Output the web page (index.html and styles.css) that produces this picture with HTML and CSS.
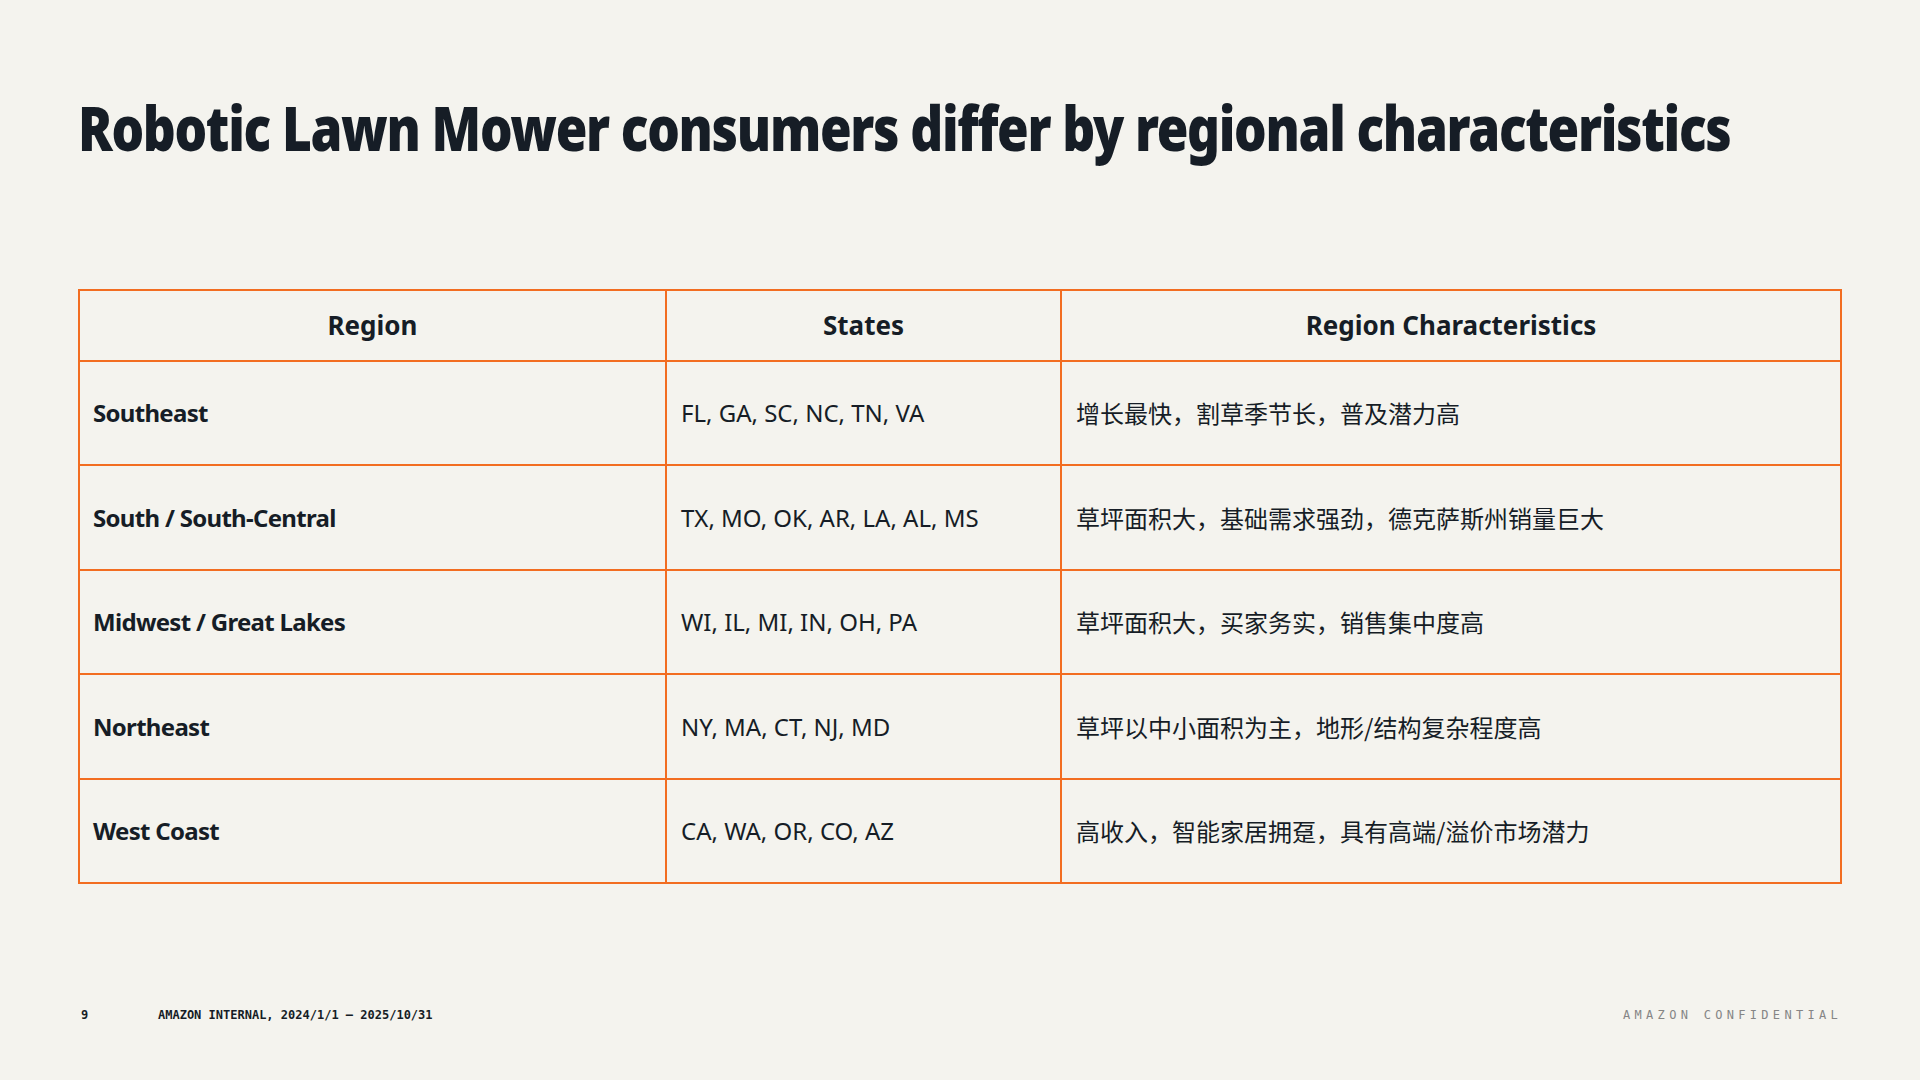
FILE: index.html
```html
<!DOCTYPE html>
<html lang="en">
<head>
<meta charset="utf-8">
<title>Robotic Lawn Mower consumers differ by regional characteristics</title>
<link rel="stylesheet" href="styles.css">
</head>
<body>
<div class="slide">
  <h1 class="title"><span class="title-text">Robotic Lawn Mower consumers differ by regional characteristics</span></h1>
  <table class="region-table">
    <colgroup>
      <col class="col-region">
      <col class="col-states">
      <col class="col-chars">
    </colgroup>
    <thead>
      <tr>
        <th>Region</th>
        <th>States</th>
        <th>Region Characteristics</th>
      </tr>
    </thead>
    <tbody>
      <tr>
        <td class="name">Southeast</td>
        <td>FL, GA, SC, NC, TN, VA</td>
        <td class="cjk">增长最快，割草季节长，普及潜力高</td>
      </tr>
      <tr>
        <td class="name">South / South-Central</td>
        <td>TX, MO, OK, AR, LA, AL, MS</td>
        <td class="cjk">草坪面积大，基础需求强劲，德克萨斯州销量巨大</td>
      </tr>
      <tr>
        <td class="name">Midwest / Great Lakes</td>
        <td>WI, IL, MI, IN, OH, PA</td>
        <td class="cjk">草坪面积大，买家务实，销售集中度高</td>
      </tr>
      <tr>
        <td class="name">Northeast</td>
        <td>NY, MA, CT, NJ, MD</td>
        <td class="cjk">草坪以中小面积为主，地形/结构复杂程度高</td>
      </tr>
      <tr>
        <td class="name">West Coast</td>
        <td>CA, WA, OR, CO, AZ</td>
        <td class="cjk">高收入，智能家居拥趸，具有高端/溢价市场潜力</td>
      </tr>
    </tbody>
  </table>
  <footer class="footer">
    <div class="footer-left">
      <span class="page-num">9</span>
      <span class="source">AMAZON INTERNAL, 2024/1/1 – 2025/10/31</span>
    </div>
    <div class="confidential">AMAZON CONFIDENTIAL</div>
  </footer>
</div>
</body>
</html>
```
FILE: styles.css
```css
html, body {
  margin: 0;
  padding: 0;
  background: #f4f3ee;
}

.slide {
  width: 1920px;
  height: 1080px;
  box-sizing: border-box;
  padding: 0 80px 0 78px;
  display: flex;
  flex-direction: column;
  color: #161d26;
  overflow: hidden;
}

.title {
  margin: 87px 0 0 0;
  font-family: "Noto Sans", "Inter", sans-serif;
  font-weight: 900;
  font-size: 62px;
  line-height: 80px;
  letter-spacing: -1.6px;
  white-space: nowrap;
}

.title-text {
  display: inline-block;
  transform: scaleX(0.828);
  transform-origin: left center;
}

.region-table {
  margin-top: 122px;
  width: 1762px;
  border-collapse: collapse;
  table-layout: fixed;
  font-family: "Noto Sans", "Noto Sans CJK SC", sans-serif;
  font-size: 24px;
  color: #161d26;
}

.col-region { width: 587px; }
.col-states { width: 395px; }
.col-chars { width: 780px; }

.region-table th,
.region-table td {
  border: 2px solid #f26d21;
  padding: 0 14px;
}

.region-table th {
  height: 68.5px;
  font-weight: 700;
  font-size: 26px;
  text-align: center;
}

.region-table td {
  height: 102.5px;
  font-weight: 400;
  text-align: left;
}

.region-table td.name {
  font-weight: 700;
  letter-spacing: -0.7px;
  padding-left: 13px;
}

.region-table td.cjk {
  font-family: "Noto Sans CJK SC", "Noto Sans", sans-serif;
}

.footer {
  margin-top: auto;
  margin-bottom: 57px;
  display: flex;
  justify-content: space-between;
  align-items: center;
  font-size: 12px;
  line-height: 16px;
}

.footer-left {
  display: flex;
  align-items: center;
  font-family: "DejaVu Sans Mono", "Liberation Mono", monospace;
  font-weight: 700;
  color: #161d26;
}

.page-num {
  width: 77px;
  padding-left: 3px;
}

.confidential {
  font-family: "DejaVu Sans Mono", "Liberation Mono", monospace;
  font-size: 12px;
  letter-spacing: 4.3px;
  color: #858585;
  margin-right: -2px;
}
```
